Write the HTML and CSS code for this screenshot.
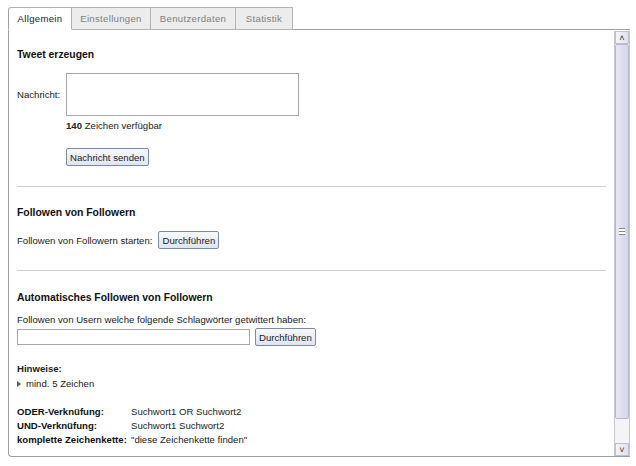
FILE: index.html
```html
<!DOCTYPE html>
<html>
<head>
  <title>Twitter Tool</title>
  <link rel="stylesheet" href="styles.css">
</head>
<body>
  <div class="tabs">
    <div class="tab active t1">Allgemein</div>
    <div class="tab t2">Einstellungen</div>
    <div class="tab t3">Benutzerdaten</div>
    <div class="tab t4">Statistik</div>
  </div>
  <div class="panel">
    <div class="content">
      <h2>Tweet erzeugen</h2>
      <div class="msg-row">
        <label class="msg-label">Nachricht:</label>
        <textarea class="msg-box"></textarea>
      </div>
      <div class="indent counter"><b>140</b> Zeichen verfügbar</div>
      <div class="indent send"><button class="btn">Nachricht senden</button></div>

      <hr>

      <h2>Followen von Followern</h2>
      <div class="inline-row">
        <span>Followen von Followern starten:</span>
        <button class="btn">Durchführen</button>
      </div>

      <hr class="hr-second">

      <h2>Automatisches Followen von Followern</h2>
      <div class="hint-text">Followen von Usern welche folgende Schlagwörter getwittert haben:</div>
      <div class="search-row">
        <input type="text" class="search-input">
        <button class="btn">Durchführen</button>
      </div>

      <div class="notes-title">Hinweise:</div>
      <ul class="notes">
        <li>mind. 5 Zeichen</li>
      </ul>

      <table class="syntax">
        <tr><th>ODER-Verknüfung:</th><td>Suchwort1 OR Suchwort2</td></tr>
        <tr><th>UND-Verknüfung:</th><td>Suchwort1 Suchwort2</td></tr>
        <tr><th>komplette Zeichenkette:</th><td>"diese Zeichenkette finden"</td></tr>
      </table>
    </div>
    <div class="scrollbar">
      <div class="sb-btn sb-up">&#708;</div>
      <div class="sb-thumb"><span class="grip"></span></div>
      <div class="sb-track"></div>
      <div class="sb-btn sb-down">&#709;</div>
    </div>
  </div>
</body>
</html>
```

FILE: styles.css
```css
body {
  margin: 0;
  padding: 7px 6px 0 8px;
  background: #fff;
  font-family: "Liberation Sans", Arial, sans-serif;
  font-size: 9.6px;
  color: #222;
}

.tabs {
  display: flex;
  height: 23px;
}
.tab {
  box-sizing: border-box;
  height: 23px;
  line-height: 22px;
  text-align: center;
  letter-spacing: 0.3px;
  border: 1px solid #b4b4b4;
  border-left: none;
  background: #ececec;
  color: #808080;
}
.tab:first-child {
  border-left: 1px solid #a0a0a0;
  border-top-left-radius: 3px;
}
.tab.active {
  background: #fff;
  color: #222;
  border-bottom-color: #fff;
}
.t1 { width: 64px; }
.t2 { width: 79px; }
.t3 { width: 85px; }
.t4 { width: 57px; }

.panel {
  display: flex;
  height: 428px;
  box-sizing: border-box;
  border: 1px solid #a0a0a0;
  border-right: none;
  border-bottom-left-radius: 4px;
  margin-top: -1px;
}
.content {
  flex: 1;
  padding: 18px 8px 0 8px;
}

h2 {
  margin: 0;
  font-size: 10.4px;
  line-height: 14px;
  font-weight: bold;
  color: #111;
}

.msg-row {
  display: flex;
  align-items: center;
  margin-top: 11px;
}
.msg-label {
  width: 49px;
}
.msg-box {
  width: 233px;
  height: 43px;
  box-sizing: border-box;
  border: 1px solid #a8a8a8;
  resize: none;
  margin: 0;
}
.indent {
  margin-left: 49px;
}
.counter {
  margin-top: 3px;
  line-height: 14px;
}
.send {
  margin-top: 15px;
}

.btn {
  font-family: "Liberation Sans", Arial, sans-serif;
  font-size: 9.6px;
  height: 18px;
  padding: 0 3px;
  border: 1px solid #7b8aa6;
  border-radius: 2px;
  background: linear-gradient(#f8f9fc, #dfe4ee);
  color: #222;
}

hr {
  border: none;
  border-top: 1px solid #d0d0d0;
  margin: 20px 0 19px 0;
}
.hr-second {
  margin: 21px 0 20px 0;
}

.inline-row {
  display: flex;
  align-items: center;
  gap: 6px;
  margin-top: 11px;
}

.hint-text {
  margin-top: 8px;
  line-height: 14px;
}
.search-row {
  display: flex;
  align-items: center;
  gap: 5px;
  margin-top: 1px;
}
.search-input {
  width: 233px;
  height: 16px;
  box-sizing: border-box;
  border: 1px solid #a8a8a8;
  margin: 0;
}

.notes-title {
  font-weight: bold;
  margin-top: 16px;
  line-height: 14px;
}
.notes {
  list-style: none;
  margin: 1px 0 0 0;
  padding: 0;
  line-height: 14px;
}
.notes li::before {
  content: "";
  display: inline-block;
  border-left: 4px solid #555;
  border-top: 3px solid transparent;
  border-bottom: 3px solid transparent;
  margin-right: 5px;
}

.syntax {
  border-collapse: collapse;
  margin-top: 14px;
}
.syntax th {
  text-align: left;
  font-weight: bold;
  padding: 0 3px 0 0;
  width: 111px;
  white-space: nowrap;
  line-height: 14px;
  color: #111;
}
.syntax td {
  padding: 0;
  line-height: 14px;
}

.scrollbar {
  width: 14px;
  display: flex;
  flex-direction: column;
  background: #f4f4f8;
  border-left: 1px solid #c8c8d0;
  border-right: 1px solid #c8c8d0;
  margin-top: 1px;
}
.sb-btn {
  height: 13px;
  box-sizing: border-box;
  border: 1px solid #c0c0c8;
  background: linear-gradient(90deg, #f4f4f8, #e0e0ea);
  font-size: 9px;
  line-height: 12px;
  text-align: center;
  color: #333;
}
.sb-thumb {
  height: 375px;
  box-sizing: border-box;
  border: 1px solid #b8b8cc;
  border-radius: 2px;
  background: linear-gradient(90deg, #e8e8f4, #d4d4e8);
  display: flex;
  align-items: center;
  justify-content: center;
}
.grip {
  width: 6px;
  height: 5px;
  border-top: 1px solid #888;
  border-bottom: 1px solid #888;
  background: linear-gradient(#fff 0 2px, #888 2px 3px, #fff 3px);
}
.sb-track {
  flex: 1;
}
```
